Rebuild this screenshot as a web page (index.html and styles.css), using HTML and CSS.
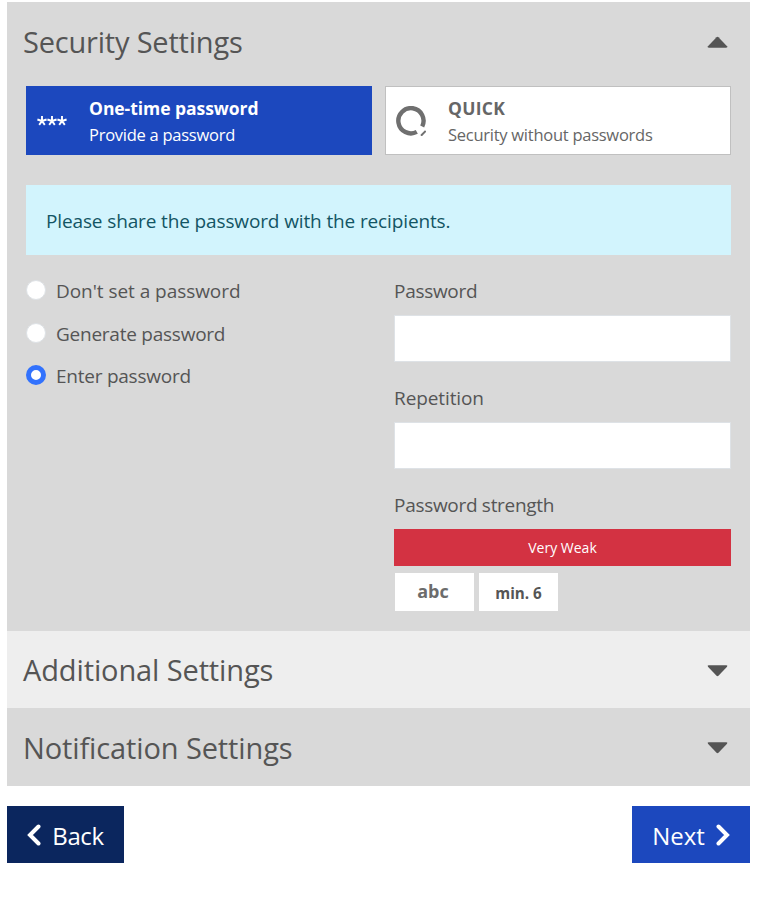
FILE: index.html
```html
<!DOCTYPE html>
<html lang="en">
<head>
    <meta charset="UTF-8">
    <meta name="viewport" content="width=device-width, initial-scale=1.0">
    <title>Security Settings</title>
    <link rel="stylesheet" href="styles.css">
</head>
<body>
    <div class="container">
        <section class="panel">
            <div class="panel-header">
                <h2 class="title-security">Security Settings</h2>
                <svg class="caret" viewBox="0 0 22 12"><path d="M2 12 Q0 12 1 10.5 L10 1 Q11 0 12 1 L21 10.5 Q22 12 20 12 Z"/></svg>
            </div>

            <div class="panel-body">
                <div class="methods">
                    <button class="method active">
                        <svg class="stars" viewBox="0 0 30 10">
                            <path d="M5 0V5M5 5L.4 3.5M5 5L9.6 3.5M5 5L2.2 8.9M5 5L7.8 8.9M15 0V5M15 5L10.4 3.5M15 5L19.6 3.5M15 5L12.2 8.9M15 5L17.8 8.9M25 0V5M25 5L20.4 3.5M25 5L29.6 3.5M25 5L22.2 8.9M25 5L27.8 8.9"/>
                        </svg>
                        <span class="method-text">
                            <strong class="name-otp">One-time password</strong>
                            <span class="method-desc">Provide a password</span>
                        </span>
                    </button>
                    <button class="method">
                        <svg class="quick" viewBox="0 0 30 30">
                            <path class="ring" d="M20.8 25.9 A12.6 12.6 0 1 1 26.2 20.4"/>
                            <path class="tick" d="M25 29.700L29.700 25"/>
                        </svg>
                        <span class="method-text">
                            <strong class="name-quick">QUICK</strong>
                            <span class="method-desc">Security without passwords</span>
                        </span>
                    </button>
                </div>

                <div class="info">Please share the password with the recipients.</div>

                <div class="columns">
                    <div class="options">
                        <label class="option"><input type="radio" name="mode"><span class="option-none">Don't set a password</span></label>
                        <label class="option"><input type="radio" name="mode"><span>Generate password</span></label>
                        <label class="option"><input type="radio" name="mode" checked><span>Enter password</span></label>
                    </div>

                    <div class="fields">
                        <div class="field">
                            <label for="password">Password</label>
                            <input type="password" id="password">
                        </div>
                        <div class="field">
                            <label class="label-repetition" for="repetition">Repetition</label>
                            <input type="password" id="repetition">
                        </div>
                        <div class="strength-label">Password strength</div>
                        <div class="strength">Very Weak</div>
                        <div class="rules">
                            <span class="rule rule-abc">abc</span>
                            <span class="rule">min. 6</span>
                        </div>
                    </div>
                </div>
            </div>
        </section>

        <section class="panel light">
            <div class="panel-header">
                <h2>Additional Settings</h2>
                <svg class="caret down" viewBox="0 0 22 12"><path d="M2 12 Q0 12 1 10.5 L10 1 Q11 0 12 1 L21 10.5 Q22 12 20 12 Z"/></svg>
            </div>
        </section>

        <section class="panel">
            <div class="panel-header last">
                <h2>Notification Settings</h2>
                <svg class="caret down" viewBox="0 0 22 12"><path d="M2 12 Q0 12 1 10.5 L10 1 Q11 0 12 1 L21 10.5 Q22 12 20 12 Z"/></svg>
            </div>
        </section>

        <div class="buttons">
            <button class="nav back">
                <svg class="chevron" viewBox="0 0 14 22"><path d="M11.5 2.5L3 11l8.500 8.500"/></svg>
                <span>Back</span>
            </button>
            <button class="nav next">
                <span>Next</span>
                <svg class="chevron" viewBox="0 0 14 22"><path d="M2.500 2.500L11 11l-8.500 8.500"/></svg>
            </button>
        </div>
    </div>
</body>
</html>
```

FILE: styles.css
```css
* {
    box-sizing: border-box;
}

body {
    font-family: "Open Sans", "Noto Sans", sans-serif;
    font-size: 19px;
    margin: 0;
    padding: 2px 14px 0 7px;
    background-color: #fff;
    color: #555;
}

button {
    font-family: inherit;
    cursor: pointer;
}

.panel {
    background-color: #d9d9d9;
}

.panel.light {
    background-color: #eee;
}

.panel-header {
    display: flex;
    align-items: center;
    justify-content: space-between;
    height: 77px;
    padding: 0 22px 0 16px;
}

.panel-header.last {
    height: 78px;
}

.panel-header h2 {
    margin: 1px 0 0;
    font-size: 29px;
    font-weight: 400;
    letter-spacing: -0.12px;
    line-height: 40px;
    white-space: nowrap;
}

.panel-header .title-security {
    margin-top: 3px;
    letter-spacing: -0.2px;
}

.caret {
    width: 21px;
    height: 12px;
    margin-top: 2px;
    fill: #555;
}

.caret.down {
    transform: rotate(180deg);
}

.panel-body {
    padding: 7px 19px 20px;
}

.methods {
    display: flex;
    gap: 13px;
}

.method {
    display: flex;
    align-items: center;
    flex: 1;
    height: 69px;
    padding: 0 10px;
    border: 1px solid #c0c0c0;
    background-color: #fff;
    color: #666;
    text-align: left;
}

.method.active {
    border-color: #1c48be;
    background-color: #1c48be;
    color: #fff;
}

.stars {
    width: 30px;
    height: 10px;
    margin: 1px 22px 0 0;
    fill: none;
    stroke: #fff;
    stroke-width: 1.9;
}

.quick {
    width: 30px;
    height: 30px;
    margin: 0 22px 0 0;
    fill: none;
    stroke: #6f6f6f;
}

.ring {
    stroke-width: 4.4;
}

.tick {
    stroke-width: 2;
}

.method-text {
    display: flex;
    flex-direction: column;
    font-size: 16.5px;
    line-height: 26px;
    white-space: nowrap;
}

.method-text strong {
    font-size: 17.5px;
}

.method-text .name-otp {
    letter-spacing: -0.05px;
}

.method-text .name-quick {
    letter-spacing: 0.3px;
}

.method-desc {
    height: 26px;
    line-height: 28px;
    letter-spacing: -0.26px;
}

.info {
    height: 70px;
    margin-top: 30px;
    padding: 0 20px;
    background-color: #d2f4fd;
    color: #135564;
    letter-spacing: -0.13px;
    line-height: 72px;
}

.columns {
    display: flex;
    justify-content: space-between;
    margin-top: 22px;
}

.option {
    display: flex;
    gap: 10px;
    height: 42.5px;
    letter-spacing: -0.24px;
    line-height: 28px;
}

.option-none {
    letter-spacing: -0.05px;
}

.option input {
    appearance: none;
    width: 20px;
    height: 20px;
    margin: 3px 0 0;
    border: 1px solid #dee2e6;
    border-radius: 50%;
    background-color: #fff;
}

.option input:checked {
    border: 5px solid #3272fd;
}

.fields {
    width: 337px;
}

.field {
    height: 107px;
}

.field label, .strength-label {
    display: block;
    letter-spacing: -0.3px;
    line-height: 28px;
}

.field .label-repetition {
    letter-spacing: -0.1px;
}

.field input {
    display: block;
    width: 100%;
    height: 47px;
    margin-top: 10px;
    padding: 8px 12px;
    border: 1px solid #dee2e6;
    background-color: #fff;
}

.strength {
    height: 37px;
    margin-top: 10px;
    background-color: #d33242;
    color: #fff;
    font-size: 14px;
    line-height: 37px;
    text-align: center;
}

.rules {
    display: flex;
    gap: 5px;
    padding: 7px 1px 0;
}

.rule {
    width: 79px;
    height: 38px;
    background-color: #fff;
    font-size: 15.2px;
    font-weight: 700;
    line-height: 41px;
    text-align: center;
}

.rule-abc {
    padding-right: 3px;
    color: #6c6c6c;
    font-size: 18px;
    line-height: 36px;
}

.buttons {
    display: flex;
    justify-content: space-between;
    margin-top: 20px;
}

.nav {
    display: flex;
    align-items: center;
    justify-content: center;
    gap: 11px;
    width: 117px;
    height: 57px;
    padding: 0;
    border: none;
    background-color: #0b265e;
    color: #fff;
    font-size: 24px;
    line-height: 36px;
}

.nav span {
    margin-top: 3px;
}

.nav.back {
    letter-spacing: -0.4px;
}

.nav.next {
    width: 118px;
    background-color: #1c48be;
}

.chevron {
    width: 14px;
    height: 22px;
    fill: none;
    stroke: #fff;
    stroke-width: 4;
    stroke-linecap: round;
}
```
